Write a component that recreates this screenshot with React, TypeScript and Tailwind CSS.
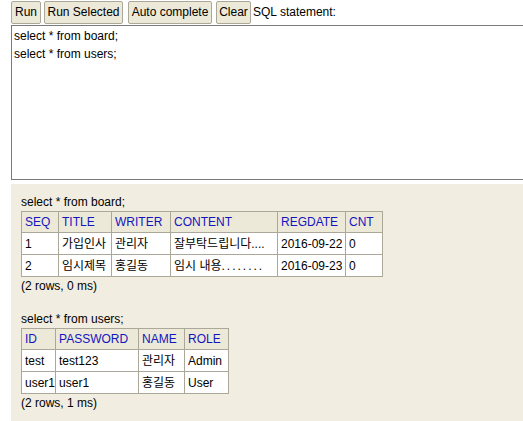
import React from 'react';

const font = 'font-["Liberation_Sans","Noto_Sans_CJK_KR",sans-serif]';

interface ResultTableProps {
  query: string;
  columns: { name: string; width: string }[];
  rows: React.ReactNode[][];
  footer: string;
}

const ResultTable: React.FC<ResultTableProps> = ({ query, columns, rows, footer }) => (
  <div>
    <div className="h-[18px] leading-[18px]">{query}</div>
    <table className="border-collapse border border-[#aca899]">
      <thead>
        <tr>
          {columns.map((col) => (
            <th
              key={col.name}
              className={`${col.width} h-[21px] border border-[#aca899] bg-[#ece9d8] pl-[3px] pr-0 text-left font-normal text-[#1515c0]`}
            >
              {col.name}
            </th>
          ))}
        </tr>
      </thead>
      <tbody>
        {rows.map((row, i) => (
          <tr key={i}>
            {row.map((cell, j) => (
              <td
                key={j}
                className="h-[22px] overflow-hidden whitespace-nowrap border border-[#aca899] bg-white pl-[3px] pr-0"
              >
                {cell}
              </td>
            ))}
          </tr>
        ))}
      </tbody>
    </table>
    <div className="h-[18px] leading-[18px]">{footer}</div>
  </div>
);

const buttons = [
  { label: 'Run', width: 'w-[30px]', gap: 'ml-0' },
  { label: 'Run Selected', width: 'w-[79px]', gap: 'ml-[3px]' },
  { label: 'Auto complete', width: 'w-[84px]', gap: 'ml-[5px]' },
  { label: 'Clear', width: 'w-[35px]', gap: 'ml-[4px]' },
];

export default function App() {
  return (
    <div className={`${font} h-[421px] w-[523px] overflow-hidden bg-white text-[12px] text-black`}>
      <div className="flex h-[25px] items-start pl-[11px] pt-[1px]">
        {buttons.map((b) => (
          <button
            key={b.label}
            className={`${b.width} ${b.gap} h-[23px] rounded-[2px] border border-[#aca899] bg-[#ece9d8] text-center leading-[21px] text-black`}
          >
            {b.label}
          </button>
        ))}
        <span className="ml-[2px] leading-[23px]">SQL statement:</span>
      </div>

      <div className="ml-[11px] h-[155px] w-[520px] border border-r-0 border-[#7a7a7a] bg-white pl-[2px] pt-[1px] leading-[18px]">
        <div>select * from board;</div>
        <div>select * from users;</div>
      </div>

      <div className="ml-[11px] mt-[4px] h-[240px] bg-[#f1ede0] pl-[10px] pt-[9px]">
        <ResultTable
          query="select * from board;"
          columns={[
            { name: 'SEQ', width: 'w-[37px]' },
            { name: 'TITLE', width: 'w-[53px]' },
            { name: 'WRITER', width: 'w-[59px]' },
            { name: 'CONTENT', width: 'w-[107px]' },
            { name: 'REGDATE', width: 'w-[68px]' },
            { name: 'CNT', width: 'w-[37px]' },
          ]}
          rows={[
            ['1', '가입인사', '관리자', '잘부탁드립니다....', '2016-09-22', '0'],
            [
              '2',
              '임시제목',
              '홍길동',
              <>
                임시 내용<span className="tracking-[2px]">........</span>
              </>,
              '2016-09-23',
              '0',
            ],
          ]}
          footer="(2 rows, 0 ms)"
        />
        <div className="h-[15px]" />
        <ResultTable
          query="select * from users;"
          columns={[
            { name: 'ID', width: 'w-[34px]' },
            { name: 'PASSWORD', width: 'w-[83px]' },
            { name: 'NAME', width: 'w-[46px]' },
            { name: 'ROLE', width: 'w-[44px]' },
          ]}
          rows={[
            ['test', 'test123', '관리자', 'Admin'],
            ['user1', 'user1', '홍길동', 'User'],
          ]}
          footer="(2 rows, 1 ms)"
        />
      </div>
    </div>
  );
}
